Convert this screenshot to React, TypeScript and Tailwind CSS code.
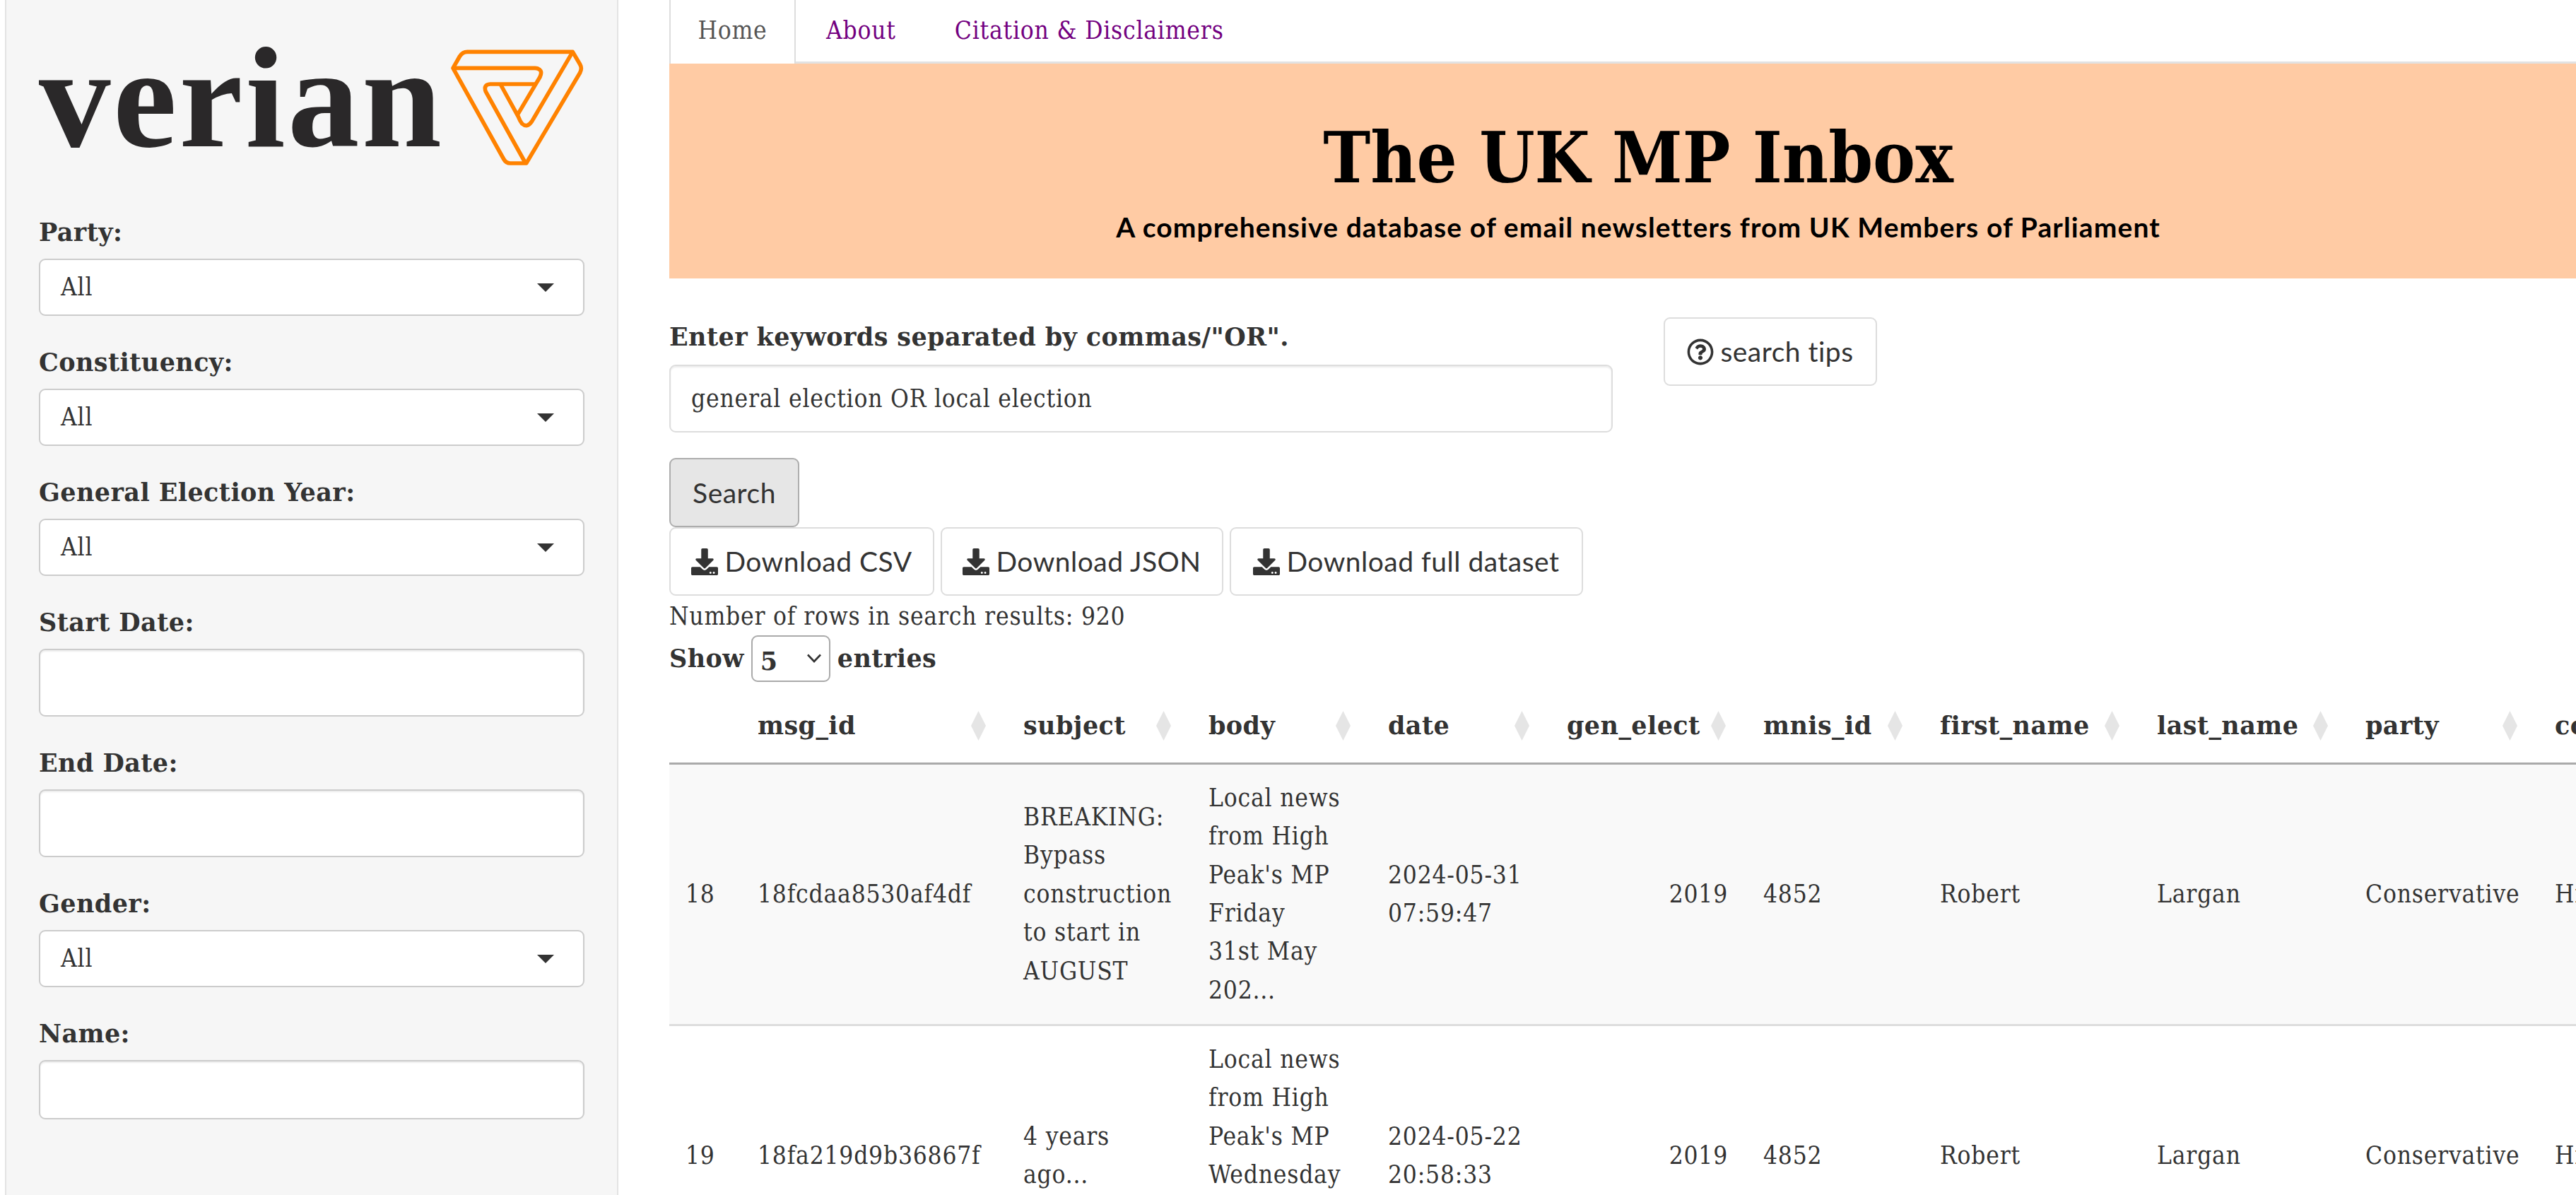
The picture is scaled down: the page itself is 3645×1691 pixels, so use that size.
import { FaDownload, FaRegQuestionCircle } from "react-icons/fa";

const columns = [
  { name: "", width: "w-[102px]" },
  { name: "msg_id", width: "w-[376px]" },
  { name: "subject", width: "w-[262px]" },
  { name: "body", width: "w-[254px]" },
  { name: "date", width: "w-[253px]" },
  { name: "gen_elect", width: "w-[278px]" },
  { name: "mnis_id", width: "w-[250px]" },
  { name: "first_name", width: "w-[307px]" },
  { name: "last_name", width: "w-[295px]" },
  { name: "party", width: "w-[268px]" },
  { name: "constituency", width: "w-[300px]" },
];

const rows = [
  {
    id: "18",
    msg: "18fcdaa8530af4df",
    subject: ["BREAKING:", "Bypass", "construction", "to start in", "AUGUST"],
    body: ["Local news", "from High", "Peak's MP", "Friday", "31st May", "202..."],
    date: ["2024-05-31", "07:59:47"],
  },
  {
    id: "19",
    msg: "18fa219d9b36867f",
    subject: ["4 years", "ago..."],
    body: ["Local news", "from High", "Peak's MP", "Wednesday", "22nd May", "202..."],
    date: ["2024-05-22", "20:58:33"],
  },
];

const boldSerif = "font-['DejaVu_Serif',serif] font-bold tracking-[0.4px]";

const Lines = ({ lines }: { lines: string[] }) => (
  <>
    {lines.map((l) => (
      <div key={l} className="whitespace-nowrap">
        {l}
      </div>
    ))}
  </>
);

const VerianMark = () => (
  <svg viewBox="0 0 660 600" className="ml-[-7px] mt-[-10px] h-[200px] w-[220px] shrink-0" fill="none" stroke="#ff8200" strokeWidth="17" strokeLinejoin="round">
    <path d="M57 142 L85 93 Q97 73 118 73 L565 73 L596 126 Q606 143 596 162 L368 546 L300 546 Q282 546 272 528 Z" />
    <path d="M57 142 H405 Q442 145 426 180 L331 340" />
    <path d="M565 73 L392 368 Q372 398 350 378 Q342 368 335 350 L258 210" />
    <path d="M405 210 H215 Q185 212 196 242 L365 546" />
  </svg>
);

const Label = ({ text }: { text: string }) => (
  <div className={`mb-[14px] h-[46px] leading-[46px] ${boldSerif}`}>{text}</div>
);

const SelectBox = ({ label }: { label: string }) => (
  <div className="mb-[43px]">
    <Label text={label} />
    <div className="flex h-[81px] items-center justify-between rounded-[9px] border-2 border-[#cccccc] bg-white pl-[29px] pr-[41px]">
      <span>All</span>
      <span className="h-0 w-0 border-x-[12px] border-t-[12px] border-x-transparent border-t-[#333333]" />
    </div>
  </div>
);

const TextBox = ({ label, height }: { label: string; height: string }) => (
  <div className="mb-[43px]">
    <Label text={label} />
    <div className={`rounded-[9px] border-2 border-[#cccccc] bg-white shadow-[inset_0_2px_2px_rgba(0,0,0,0.075)] ${height}`} />
  </div>
);

const DownloadButton = ({ label, width }: { label: string; width: string }) => (
  <button className={`flex h-[97px] items-center justify-center gap-[9px] rounded-[9px] border-2 border-[#dddddd] bg-white font-['Lato',sans-serif] text-[39px] tracking-[0.5px] ${width}`}>
    <FaDownload className="h-[38px] w-[38px]" />
    {label}
  </button>
);

export default function App() {
  return (
    <div className="flex h-[1691px] w-[3645px] overflow-hidden bg-white font-['DejaVu_Serif_Condensed','DejaVu_Serif',serif] text-[35px] tracking-[0.8px] text-[#333333]">
      {/* Sidebar */}
      <aside className="ml-[7px] w-[868px] shrink-0 border-x-2 border-[#e3e3e3] bg-[#f6f6f6] px-[46px] pt-[59px]">
        <div className="mb-[87px] flex h-[160px] items-start">
          <div className="font-['Liberation_Serif',serif] text-[203px] leading-[160px] font-bold tracking-[3.5px] text-[#2a2829]">verian</div>
          <VerianMark />
        </div>
        <SelectBox label="Party:" />
        <SelectBox label="Constituency:" />
        <SelectBox label="General Election Year:" />
        <TextBox label="Start Date:" height="h-[96px]" />
        <TextBox label="End Date:" height="h-[96px]" />
        <SelectBox label="Gender:" />
        <TextBox label="Name:" height="h-[84px]" />
      </aside>

      {/* Main */}
      <main className="ml-[72px] w-[2742px] shrink-0">
        <nav className="flex h-[90px] text-[#730080]">
          <div className="flex w-[179px] items-center justify-center border-x-2 border-[#dddddd] pb-[4px] text-[#555555]">Home</div>
          <div className="flex flex-1 items-center border-b-[3px] border-[#e2e2e2]">
            <span className="ml-[43px]">About</span>
            <span className="ml-[83px]">Citation &amp; Disclaimers</span>
          </div>
        </nav>

        <header className="flex h-[304px] flex-col items-center bg-[#ffcba4] pt-[74px] text-black">
          <h1 className="text-[100px] leading-[118px] font-bold tracking-normal">The UK MP Inbox</h1>
          <p className="mt-[14px] font-['Lato',sans-serif] text-[39px] leading-[50px] font-bold tracking-[1.1px]">
            A comprehensive database of email newsletters from UK Members of Parliament
          </p>
        </header>

        <section className="flex items-start pt-[55px]">
          <div className="w-[1335px]">
            <div className={`mt-[5px] h-[46px] leading-[46px] ${boldSerif}`}>Enter keywords separated by commas/"OR".</div>
            <div className="mt-[16px] flex h-[96px] items-center rounded-[9px] border-2 border-[#dddddd] bg-white pl-[29px] shadow-[inset_0_2px_2px_rgba(0,0,0,0.075)]">
              general election OR local election
            </div>
          </div>
          <button className="ml-[72px] flex h-[97px] w-[302px] items-center justify-center gap-[9px] rounded-[9px] border-2 border-[#dddddd] bg-white font-['Lato',sans-serif] text-[39px] tracking-[0.5px]">
            <FaRegQuestionCircle className="h-[38px] w-[38px]" />
            search tips
          </button>
        </section>

        <button className="mt-[36px] block h-[98px] w-[184px] rounded-[9px] border-2 border-[#adadad] bg-[#e6e6e6] font-['Lato',sans-serif] text-[39px] tracking-[0.5px]">
          Search
        </button>
        <div className="flex gap-[9px]">
          <DownloadButton label="Download CSV" width="w-[375px]" />
          <DownloadButton label="Download JSON" width="w-[400px]" />
          <DownloadButton label="Download full dataset" width="w-[500px]" />
        </div>
        <div className="mt-[6px] h-[46px] leading-[46px]">Number of rows in search results: 920</div>
        <div className={`mt-[4px] flex h-[66px] items-center gap-[10px] ${boldSerif}`}>
          Show
          <div className="relative h-[66px] w-[112px]">
            <select defaultValue="5" className="h-full w-full appearance-none rounded-[9px] border-2 border-[#aaaaaa] bg-white pl-[11px] pt-[8px] font-bold">
              <option value="5">5</option>
            </select>
            <svg viewBox="0 0 20 13" className="pointer-events-none absolute right-[13px] top-[26px] h-[13px] w-[20px]" fill="none" stroke="#333333" strokeWidth="2.6">
              <polyline points="1,1.5 10,11 19,1.5" />
            </svg>
          </div>
          entries
        </div>

        {/* Results table */}
        <table className="mt-[10px] w-[2945px] table-fixed border-collapse">
          <colgroup>
            {columns.map((c) => (
              <col key={c.name} className={c.width} />
            ))}
          </colgroup>
          <thead>
            <tr className="h-[105px] border-b-[3px] border-[#aaaaaa]">
              {columns.map((c) => (
                <th key={c.name} className={`pl-[23px] text-left ${boldSerif}`}>
                  {c.name && (
                    <div className="flex items-center justify-between pr-[30px]">
                      <span className="whitespace-nowrap">{c.name}</span>
                      <svg viewBox="0 0 21 42" className="h-[42px] w-[21px] shrink-0" fill="#e5e5e5">
                        <path d="M10.5 0 L21 21 L10.5 42 L0 21 Z" />
                      </svg>
                    </div>
                  )}
                </th>
              ))}
            </tr>
          </thead>
          <tbody className="leading-[54.4px]">
            {rows.map((r, i) => (
              <tr key={r.id} className={`h-[370px] border-b-[3px] border-[#dddddd] ${i === 0 ? "bg-[#f9f9f9]" : "bg-white"}`}>
                <td className="pl-[23px]">{r.id}</td>
                <td className="pl-[23px] whitespace-nowrap">{r.msg}</td>
                <td className="pl-[23px]"><Lines lines={r.subject} /></td>
                <td className="pl-[23px]"><Lines lines={r.body} /></td>
                <td className="pl-[23px]"><Lines lines={r.date} /></td>
                <td className="pr-[27px] text-right">2019</td>
                <td className="pl-[23px]">4852</td>
                <td className="pl-[23px]">Robert</td>
                <td className="pl-[23px]">Largan</td>
                <td className="pl-[23px]">Conservative</td>
                <td className="pl-[23px]">High Peak</td>
              </tr>
            ))}
          </tbody>
        </table>
      </main>
    </div>
  );
}
